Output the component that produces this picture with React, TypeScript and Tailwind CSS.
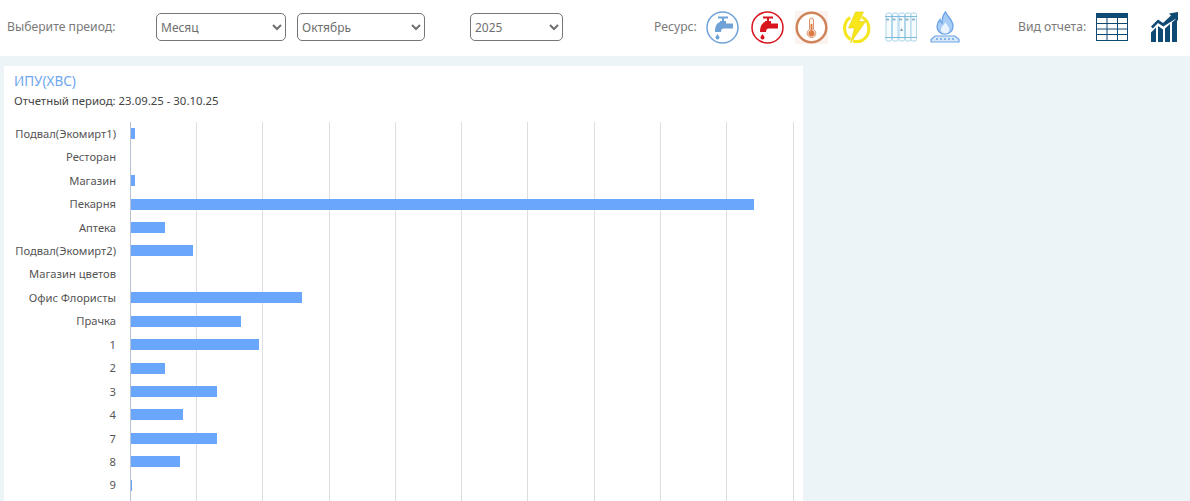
const rows = [
  { name: "Подвал(Экомирт1)", value: 4 },
  { name: "Ресторан", value: 0 },
  { name: "Магазин", value: 4 },
  { name: "Пекарня", value: 623 },
  { name: "Аптека", value: 34 },
  { name: "Подвал(Экомирт2)", value: 62 },
  { name: "Магазин цветов", value: 0 },
  { name: "Офис Флористы", value: 171 },
  { name: "Прачка", value: 110 },
  { name: "1", value: 128 },
  { name: "2", value: 34 },
  { name: "3", value: 86 },
  { name: "4", value: 52 },
  { name: "7", value: 86 },
  { name: "8", value: 49 },
  { name: "9", value: 1 },
];

const gridLines = [0, 1, 2, 3, 4, 5, 6, 7, 8, 9];

function TapIcon({ color }: { color: string }) {
  return (
    <svg width="33" height="33" viewBox="0 0 33 33" className="shrink-0">
      <circle cx="16.5" cy="16.5" r="15.5" fill="#fff" stroke={color} strokeWidth="1.5" />
      <path d="M12 6.500h10M17 6.500v4" stroke={color} strokeWidth="2" fill="none" />
      <path d="M14 10h6v2.500h7v5h-9c-2 0-2.800.6-3 3.500H9c0-5.500 1.500-9 5-10z" fill={color} />
      <path d="M11.500 23c-1.300 1.800-2 2.800-2 3.600a2 2 0 0 0 4 0c0-.8-.7-1.800-2-3.600z" fill={color} />
    </svg>
  );
}

function ThermoIcon() {
  return (
    <div className="flex h-[33px] w-[33px] shrink-0 bg-[#faf3ef]">
      <svg width="33" height="33" viewBox="0 0 33 33">
        <circle cx="16.500" cy="16.500" r="14.800" fill="#fff" stroke="#cf8559" strokeWidth="2.500" />
        <path d="M14.500 9a2 2 0 0 1 4 0v9.500a4.300 4.300 0 1 1-4 0z" fill="#fbeee6" stroke="#d59670" strokeWidth="1" />
        <path d="M15.600 13h1.800v6.500a3.100 3.100 0 1 1-1.800 0z" fill="#dd7a42" />
      </svg>
    </div>
  );
}

function BoltIcon() {
  return (
    <svg width="32" height="33" viewBox="0 0 32 33" className="shrink-0">
      <path d="M10 6.500A13.500 13.500 0 0 0 10.500 28.500M22 6a13.500 13.500 0 0 1 0 23.500 13 13 0 0 1-9 .5" fill="none" stroke="#f5e61d" strokeWidth="3" />
      <path d="M15.500 1h8l-4.500 9.500h6.500L10.500 32l4-15H8.500z" fill="#f6e61a" stroke="#e6cf10" strokeWidth=".6" />
    </svg>
  );
}

function RadiatorIcon() {
  return (
    <svg width="32" height="30" viewBox="0 0 32 30" className="shrink-0">
      {[1, 7.500, 14, 20.500, 26].map((x) => (
        <rect key={x} x={x} y="1" width="5.500" height="28" rx="1.500" fill="#f6fbfd" stroke="#9ccbe4" strokeWidth=".8" />
      ))}
      <path d="M0 4.500h32M0 25.500h32" stroke="#7dbadc" strokeWidth="1.200" />
      <path d="M1 7.500h30" stroke="#93b7cd" strokeWidth="2" strokeDasharray="3 3.500" />
      <path d="M15 19l1.500-3 1.500 3z" fill="#7fa0b5" />
    </svg>
  );
}

function GasIcon() {
  return (
    <svg width="30" height="32" viewBox="0 0 30 32" className="shrink-0">
      <path d="M15.500 1c1 4 7.500 7.500 7.500 14 0 5-3.500 8-8 8S7 20 7 15.500c0-3 1.200-5.200 3-7 .2 1.800.8 3 2 3.700C12 8 13 4 15.500 1z" fill="#a7ccf5" stroke="#6aa3e6" strokeWidth="1.300" />
      <path d="M15.500 11c.6 2.500 3.700 4 3.700 7.500a4 4 0 0 1-8.200 0c0-3 3.300-4.500 4.500-7.500z" fill="#e9f3fd" />
      <path d="M5 25h20l4 3.500V31H1v-2.500z" fill="#d8e9f9" stroke="#6aa3e6" strokeWidth="1.200" />
      <path d="M6 28h18" stroke="#6aa3e6" strokeWidth="1.500" strokeDasharray="2 2" />
    </svg>
  );
}

function TableIcon() {
  return (
    <svg width="32" height="28" viewBox="0 0 32 28" className="shrink-0">
      <rect x="0" y="0" width="32" height="5" fill="#0f4a75" />
      <path d="M.5 5v23M11 5v23M21.500 5v23M31.500 5v23M0 10.500h32M0 16h32M0 21.500h32M0 27.500h32" stroke="#0f4a75" strokeWidth="1" fill="none" />
    </svg>
  );
}

function ChartIcon() {
  return (
    <svg width="27" height="30" viewBox="0 0 27 30" className="shrink-0">
      <path d="M0 14.500 7 7.500l5 3.500L20 3.500 18 1.500 27 0v9l-2.200-2.200L12.300 14.500 7 11 1.800 16.500z" fill="#0f4a75" />
      <path d="M0 30v-9.500l5-5V30zM7 30V14l5 3.500V30zM14 30V16.500l5-4.500v18zM21 30V10.500l5-4.500v24z" fill="#0f4a75" />
    </svg>
  );
}

function PeriodSelect({ value, className }: { value: string; className: string }) {
  return (
    <select
      defaultValue={value}
      className={`h-[28px] rounded-[5px] border border-[#767676] bg-white text-[12px] text-[#6f6f6f] ${className}`}
    >
      <option>{value}</option>
    </select>
  );
}

export default function App() {
  return (
    <div className="h-[501px] w-[1190px] overflow-hidden bg-[#edf4f8] font-['Noto_Sans','Open_Sans',sans-serif]">
      <header className="flex h-[56px] items-center bg-white pb-[2px] pl-[7px] text-[12.2px] text-[#7a7a7a]">
        <span className="w-[149px]">Выберите преиод:</span>
        <PeriodSelect value="Месяц" className="w-[130px]" />
        <PeriodSelect value="Октябрь" className="ml-[11px] w-[128px]" />
        <PeriodSelect value="2025" className="ml-[45px] w-[93px]" />
        <span className="ml-[91px] w-[52px]">Ресурс:</span>
        <div className="flex items-center">
          <TapIcon color="#6fa3d8" />
          <div className="ml-[12px]"><TapIcon color="#d8141e" /></div>
          <div className="ml-[11px]"><ThermoIcon /></div>
          <div className="ml-[12px]"><BoltIcon /></div>
          <div className="ml-[13px]"><RadiatorIcon /></div>
          <div className="ml-[13px]"><GasIcon /></div>
        </div>
        <span className="ml-[58px] w-[78px]">Вид отчета:</span>
        <TableIcon />
        <div className="ml-[23px]"><ChartIcon /></div>
      </header>

      <main className="ml-[4px] mt-[10px] h-[435px] w-[799px] bg-white pl-[10px] pt-[6px]">
        <h2 className="text-[13.5px] leading-[19px] text-[#6ea6ee]">ИПУ(ХВС)</h2>
        <p className="mt-[2px] text-[11.4px] leading-[16px] text-[#444]">Отчетный период: 23.09.25 - 30.10.25</p>

        <div className="relative mt-[13px] h-[379px]">
          <div className="absolute bottom-0 left-[116px] top-0 flex">
            <div className="h-full w-[66px] border-l border-[#b9c3d6]" />
            {gridLines.map((n) => (
              <div key={n} className="h-full w-[66.3px] border-l border-[#dedede]" />
            ))}
          </div>
          <div className="relative flex flex-col">
            {rows.map((row) => (
              <div key={row.name} className="flex h-[23.44px] items-center">
                <span className="w-[102px] whitespace-nowrap pt-[1px] text-right text-[11.2px] text-[#555]">{row.name}</span>
                <div
                  className="ml-[15px] h-[11px] bg-[#6aa6fb]"
                  style={{ width: row.value }}
                />
              </div>
            ))}
          </div>
        </div>
      </main>
    </div>
  );
}
